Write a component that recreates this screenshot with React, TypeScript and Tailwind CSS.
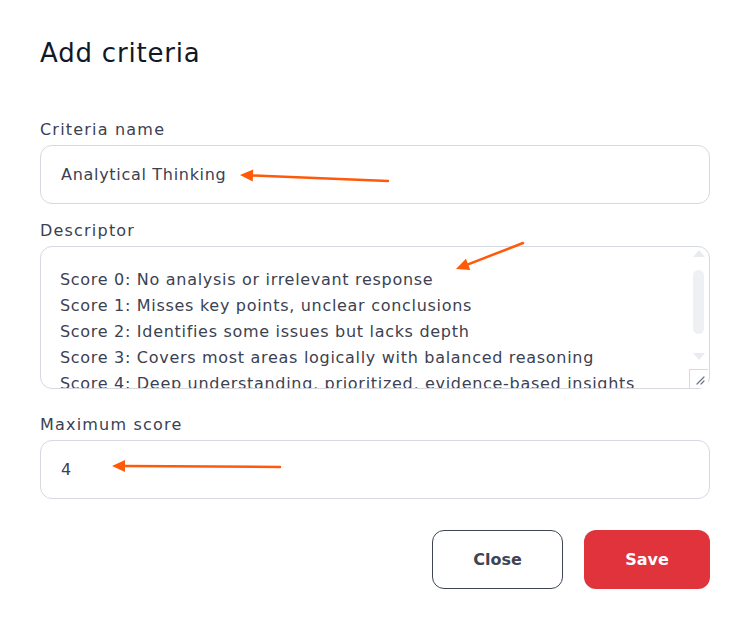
import { useState } from 'react'

const descriptor = [
	'Score 0: No analysis or irrelevant response',
	'Score 1: Misses key points, unclear conclusions',
	'Score 2: Identifies some issues but lacks depth',
	'Score 3: Covers most areas logically with balanced reasoning',
	'Score 4: Deep understanding, prioritized, evidence-based insights',
	'',
].join('\n')

function Arrow({ x1, y1, x2, y2 }: { x1: number; y1: number; x2: number; y2: number }) {
	// tail at x1,y1 -> tip at x2,y2
	const a = Math.atan2(y2 - y1, x2 - x1)
	const len = 13
	const w = 6
	const bx = x2 - Math.cos(a) * len
	const by = y2 - Math.sin(a) * len
	const px = -Math.sin(a) * w
	const py = Math.cos(a) * w
	return (
		<g>
			<line x1={x1} y1={y1} x2={bx} y2={by} stroke="#ff5a0a" strokeWidth="2.5" strokeLinecap="round" />
			<polygon points={`${x2},${y2} ${bx + px},${by + py} ${bx - px},${by - py}`} fill="#ff5a0a" />
		</g>
	)
}

// fake classic scrollbar drawn over the textarea's right edge
function Scrollbar() {
	return (
		<div className="pointer-events-none absolute right-[2px] top-[2px] bottom-[1px] w-[19px] flex flex-col items-center">
			<svg width="14" height="18" viewBox="0 0 14 18" className="mt-0">
				<path d="M7 2 L13 9 L1 9 Z" fill="#e8ebef" />
			</svg>
			<div className="mt-[4px] h-[64px] w-[11px] rounded-full bg-[#eef0f3]" />
			<svg width="14" height="18" viewBox="0 0 14 18" className="mt-[14px]">
				<path d="M1 5 L13 5 L7 12 Z" fill="#e8ebef" />
			</svg>
			<div className="mt-auto h-[19px] w-[19px] border-l border-t border-[#d6d9e0] bg-white flex items-end justify-end pr-[3px] pb-[3px]">
				<svg width="9" height="9" viewBox="0 0 9 9">
					<path d="M8 1 L1 8 M8 5 L5 8" stroke="#6b7280" strokeWidth="1.2" strokeLinecap="round" />
				</svg>
			</div>
		</div>
	)
}

export default function App() {
	const [name, setName] = useState('Analytical Thinking')
	const [desc, setDesc] = useState(descriptor)
	const [max, setMax] = useState('4')

	return (
		<div className="relative min-h-screen bg-white text-[#3b4152] tracking-[0.7px] font-['DejaVu_Sans',sans-serif]">
			<div className="pl-10 pr-[31px] pt-9">
				<h2 className="text-[26px] leading-8 pt-px tracking-[0.8px] text-[#111827]">Add criteria</h2>

				<div className="mt-[48px] flex flex-col">
					<label className="text-base leading-6 pt-px tracking-[1.2px]">Criteria name</label>
					<input
						value={name}
						onChange={e => setName(e.target.value)}
						className="mt-[3px] h-[59px] rounded-xl border border-[#d6d9e0] px-5 text-base outline-none"
					/>

					<label className="mt-[14px] pt-px text-base leading-6 tracking-[1.2px]">Descriptor</label>
					<div className="relative mt-[3px] h-[143px]">
						<textarea
							value={desc}
							onChange={e => setDesc(e.target.value)}
							className="block h-full w-full resize-none overflow-y-scroll rounded-xl border border-[#d6d9e0] pl-[19px] pr-6 pt-[20px] text-base leading-[26px] whitespace-pre outline-none [scrollbar-width:none] [&::-webkit-scrollbar]:hidden"
						/>
						<Scrollbar />
					</div>

					<label className="mt-[23px] pt-px text-base leading-6 tracking-[1.2px]">Maximum score</label>
					<input
						value={max}
						onChange={e => setMax(e.target.value)}
						className="mt-[3px] h-[59px] rounded-xl border border-[#d6d9e0] px-5 text-base outline-none"
					/>

					<div className="mt-[31px] flex justify-end gap-[21px]">
						<button className="h-[59px] w-[131px] rounded-xl border border-[#3f4454] text-base font-bold tracking-normal text-[#3f4454]">
							Close
						</button>
						<button className="h-[59px] w-[126px] rounded-xl bg-[#e0333b] text-base font-bold tracking-normal text-white">
							Save
						</button>
					</div>
				</div>
			</div>

			<svg className="pointer-events-none absolute inset-0" width="741" height="624">
				<Arrow x1={388} y1={181} x2={240} y2={175} />
				<Arrow x1={523} y1={243} x2={456} y2={269} />
				<Arrow x1={280} y1={467} x2={112} y2={466} />
			</svg>
		</div>
	)
}
